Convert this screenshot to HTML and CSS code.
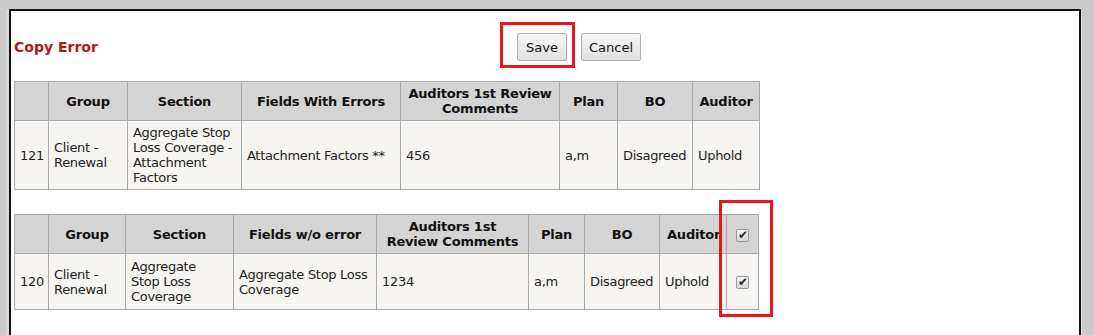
FILE: index.html
```html
<!DOCTYPE html>
<html lang="en">
<head>
  <meta charset="UTF-8">
  <meta name="viewport" content="width=device-width, initial-scale=1.0">
  <title>Copy Error</title>
  <link rel="stylesheet" href="styles.css">
</head>
<body>
  <div class="frame">
    <!-- title + buttons -->
    <div class="toolbar">
      <h2 class="title">Copy Error</h2>
      <div class="actions">
        <span class="mark"><button class="btn btn-save">Save</button></span>
        <button class="btn btn-cancel">Cancel</button>
      </div>
    </div>

    <!-- fields with errors -->
    <table class="grid grid-errors">
      <colgroup>
        <col><col><col><col><col><col><col><col>
      </colgroup>
      <thead>
        <tr>
          <th></th>
          <th>Group</th>
          <th>Section</th>
          <th>Fields With Errors</th>
          <th>Auditors 1st Review Comments</th>
          <th>Plan</th>
          <th>BO</th>
          <th>Auditor</th>
        </tr>
      </thead>
      <tbody>
        <tr>
          <td>121</td>
          <td>Client - Renewal</td>
          <td>Aggregate Stop Loss Coverage - Attachment Factors</td>
          <td>Attachment Factors **</td>
          <td>456</td>
          <td>a,m</td>
          <td>Disagreed</td>
          <td>Uphold</td>
        </tr>
      </tbody>
    </table>

    <!-- fields without error -->
    <div class="table-wrap">
      <table class="grid grid-ok">
        <colgroup>
          <col><col><col><col><col><col><col><col><col>
        </colgroup>
        <thead>
          <tr>
            <th></th>
            <th>Group</th>
            <th>Section</th>
            <th>Fields w/o error</th>
            <th>Auditors 1st Review Comments</th>
            <th>Plan</th>
            <th>BO</th>
            <th class="cut">Auditor</th>
            <th class="check"><input type="checkbox" class="box" checked></th>
          </tr>
        </thead>
        <tbody>
          <tr>
            <td>120</td>
            <td>Client - Renewal</td>
            <td>Aggregate Stop Loss Coverage</td>
            <td>Aggregate Stop Loss Coverage</td>
            <td>1234</td>
            <td>a,m</td>
            <td>Disagreed</td>
            <td>Uphold</td>
            <td class="check"><input type="checkbox" class="box" checked></td>
          </tr>
        </tbody>
      </table>
      <div class="mark-col"></div>
    </div>
  </div>
</body>
</html>
```

FILE: styles.css
```css
* {margin: 0; padding: 0;}
html, body {height: 100%;}
body {
  background-color: #cbcbcb;
  font-family: "DejaVu Sans", Verdana, sans-serif;
  font-size: 13px;
  color: #222;
  overflow: hidden;
}
.frame {
  height: 100%;
  margin: 9px 13px 0 9px;
  padding: 0 0 0 3px;
  background-color: #fff;
  border-top: 2px solid #111;
  border-left: 2px solid #111;
  border-right: 2px solid #111;
  box-shadow: -3px 0 0 #dadada, 1px 0 0 #e2e2e2;
}
.toolbar {
  display: flex;
  align-items: center;
  padding-top: 11px;
}
.title {
  flex: 0 0 486px;
  font-size: 14px;
  font-weight: bold;
  color: #b3161c;
  padding-top: 3px;
}
.actions {
  display: flex;
  align-items: center;
}
.mark {
  display: inline-block;
  border: 3px solid #e8161f;
  padding: 8px 5px 4px 14px;
}
.btn {
  display: block;
  height: 28px;
  font-family: "DejaVu Sans", Verdana, sans-serif;
  font-size: 13px;
  color: #111;
  border: 1px solid #b0b0b0;
  border-radius: 2px;
  background: linear-gradient(#f6f6f6, #e1e1e1);
}
.btn-save {width: 50px;}
.btn-cancel {width: 60px; margin-left: 6px; margin-top: 4px;}

.grid {
  border-collapse: collapse;
  table-layout: fixed;
  margin-top: 13px;
}
.grid th, .grid td {
  border: 1px solid #a8a8a8;
  padding: 4px 5px;
  line-height: 15px;
  vertical-align: middle;
}
.grid th {
  background-color: #d4d4d4;
  font-weight: bold;
  text-align: center;
  color: #111;
  letter-spacing: -0.2px;
}
.grid td {
  background-color: #f6f5f1;
  text-align: left;
  letter-spacing: -0.3px;
}
.grid-errors {width: 745px;}
.grid-errors col:nth-child(1) {width: 34px;}
.grid-errors col:nth-child(2) {width: 79px;}
.grid-errors col:nth-child(3) {width: 114px;}
.grid-errors col:nth-child(4) {width: 159px;}
.grid-errors col:nth-child(5) {width: 159px;}
.grid-errors col:nth-child(6) {width: 58px;}
.grid-errors col:nth-child(7) {width: 75px;}
.grid-errors col:nth-child(8) {width: 67px;}

.table-wrap {
  position: relative;
  margin-top: 24px;
  width: 744px;
}
.grid-ok {width: 744px; margin-top: 0;}
.grid-ok col:nth-child(1) {width: 34px;}
.grid-ok col:nth-child(2) {width: 77px;}
.grid-ok col:nth-child(3) {width: 108px;}
.grid-ok col:nth-child(4) {width: 143px;}
.grid-ok col:nth-child(5) {width: 152px;}
.grid-ok col:nth-child(6) {width: 56px;}
.grid-ok col:nth-child(7) {width: 75px;}
.grid-ok col:nth-child(8) {width: 67px;}
.grid-ok col:nth-child(9) {width: 32px;}
.grid-ok td {padding-top: 5px; padding-bottom: 5px;}
.grid th.cut {
  overflow: hidden;
  white-space: nowrap;
  text-align: left;
  padding-left: 7px;
  padding-right: 0;
}
.grid .check {text-align: center; padding: 4px 0;}

.box {
  appearance: none;
  -webkit-appearance: none;
  position: relative;
  display: inline-block;
  width: 13px;
  height: 13px;
  vertical-align: middle;
  border: 1px solid #9a9a9a;
  border-radius: 2px;
  background: linear-gradient(#f4f4f4, #d6d6d6);
}
.box:checked::after {
  content: "\2714";
  position: absolute;
  left: 1px;
  top: -1px;
  font-size: 12px;
  line-height: 13px;
  color: #2a2a2a;
}

/* annotation box over the last column */
.mark-col {
  position: absolute;
  left: 705px;
  top: -14px;
  width: 54px;
  height: 117px;
  box-sizing: border-box;
  border: 3px solid #e8161f;
  pointer-events: none;
}
```
